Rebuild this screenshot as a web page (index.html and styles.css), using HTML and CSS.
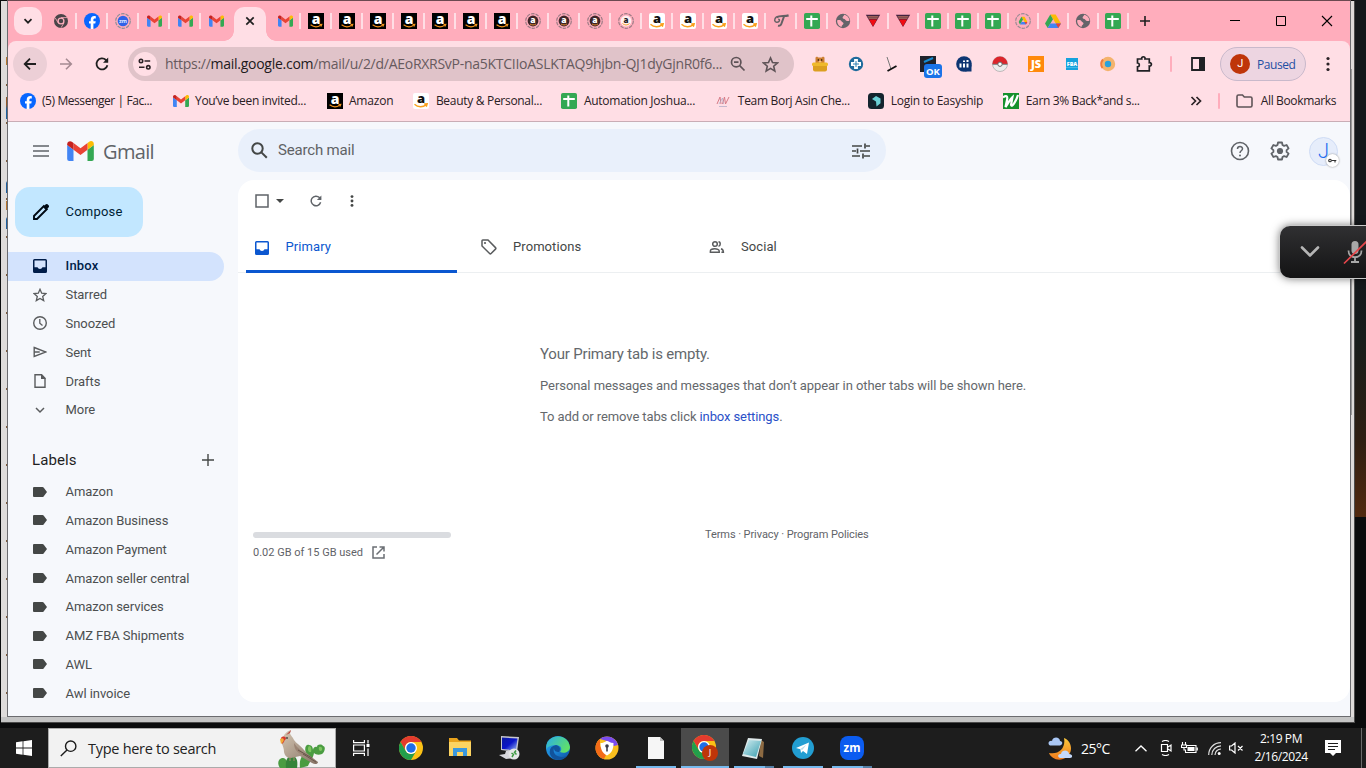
FILE: index.html
```html
<!DOCTYPE html>
<html lang="en">
<head>
<meta charset="utf-8">
<title>Gmail</title>
<link rel="stylesheet" href="styles.css">
</head>
<body>
<svg class="defs" width="0" height="0">
  <defs>
    <linearGradient id="gEdge" x1="0" y1="0" x2="1" y2="1"><stop offset="0" stop-color="#2aa6e4"/><stop offset=".5" stop-color="#1b86d8"/><stop offset="1" stop-color="#0c4fa0"/></linearGradient>
    <linearGradient id="gEdge2" x1="0" y1="0" x2="1" y2=".5"><stop offset="0" stop-color="#2aaee8"/><stop offset="1" stop-color="#5fe06a"/></linearGradient>
    <linearGradient id="gScreen" x1="0" y1="0" x2="1" y2="1"><stop offset="0" stop-color="#0b1a9e"/><stop offset=".5" stop-color="#0a14c8"/><stop offset="1" stop-color="#9fc0f5"/></linearGradient>
    <linearGradient id="gMoon" x1="0" y1="0" x2="0" y2="1"><stop offset="0" stop-color="#fbc83c"/><stop offset="1" stop-color="#f07a1c"/></linearGradient>
    <linearGradient id="gNote" x1="0" y1="0" x2="1" y2="1"><stop offset="0" stop-color="#d5eef2"/><stop offset="1" stop-color="#3a9fb0"/></linearGradient>
    <linearGradient id="gBird" x1="0" y1="0" x2="1" y2="1"><stop offset="0" stop-color="#d6c8b4"/><stop offset="1" stop-color="#857264"/></linearGradient>
  </defs>
  <symbol id="gmail" viewBox="0 0 80 60"><path fill="#4285f4" d="M0 12v42a6 6 0 0 0 6 6h13V26z"/><path fill="#34a853" d="M61 60h13a6 6 0 0 0 6-6V12L61 26z"/><path fill="#fbbc04" d="M61 6v20l19-14V9c0-8-8-11-14-7z"/><path fill="#ea4335" d="M19 26V6l21 16L61 6v20L40 42z"/><path fill="#c5221f" d="M0 9v3l19 14V6l-5-4C8-2 0 2 0 9z"/></symbol>
  <symbol id="chromegray" viewBox="0 0 16 16"><circle cx="8" cy="8" r="7" fill="#4a4448"/><circle cx="8" cy="8" r="2.9" fill="#4a4448" stroke="#ffadbc" stroke-width="1.3"/><path d="M8 4.600h6M5.100 9.800 2.200 4.800M11 9.800l-3 5" stroke="#ffadbc" stroke-width=".8"/></symbol>
  <symbol id="fb" viewBox="0 0 16 16"><circle cx="8" cy="8" r="8" fill="#0866ff"/><path fill="#fff" d="M6.700 16v-5.400H5V8.200h1.700V7c0-2.700 1.200-3.900 3.700-3.900.5 0 1.100.1 1.400.2v2.100h-.9c-1.200 0-1.500.5-1.500 1.500v1.300h2.300l-.4 2.400H9.400V16z"/></symbol>
  <symbol id="zmring" viewBox="0 0 16 16"><circle cx="8" cy="8" r="7.300" fill="none" stroke="#8e8e98" stroke-width="1.200" stroke-dasharray="3.600 1"/><circle cx="8" cy="8" r="5.300" fill="#2f62e8"/><text x="8" y="10" font-size="5.600" font-weight="700" fill="#dce6ff" text-anchor="middle">zm</text></symbol>
  <symbol id="amzb" viewBox="0 0 16 16"><path fill="#000" d="M0 0h16v16H0z"/><text x="8" y="10.600" font-size="14" font-weight="800" fill="#fff" text-anchor="middle">a</text><path d="M2.600 11.800c3.300 2.500 7.300 2.300 10 .4M12.900 13.600l.9-2.200-2.200.1" fill="none" stroke="#f5961d" stroke-width="1.100"/></symbol>
  <symbol id="amzw" viewBox="0 0 16 16"><rect width="16" height="16" rx="2" fill="#fff"/><text x="8" y="10" font-size="13" font-weight="800" fill="#111" text-anchor="middle">a</text><path d="M1.500 11.200c3.500 3.300 8.500 3.200 11.600.5M13.300 13.800l.9-3-3 .2" fill="none" stroke="#f9a01b" stroke-width="1.400"/></symbol>
  <symbol id="amzring" viewBox="0 0 16 16"><circle cx="8" cy="8" r="7.300" fill="none" stroke="#9c7b85" stroke-width="1.200" stroke-dasharray="3.600 1"/><circle cx="8" cy="8" r="5.400" fill="#3f2528"/><text x="8" y="10.400" font-size="8.500" font-weight="800" fill="#fff" text-anchor="middle">a</text><path d="M5 11c2 1.300 4 1.200 6 0" fill="none" stroke="#e08a2a"/></symbol>
  <symbol id="amzringw" viewBox="0 0 16 16"><circle cx="8" cy="8" r="7.300" fill="none" stroke="#9c7b85" stroke-width="1.200" stroke-dasharray="3.600 1"/><circle cx="8" cy="8" r="5.400" fill="#fff0f0"/><text x="8" y="9.800" font-size="8" font-weight="800" fill="#222" text-anchor="middle">a</text><path d="M4.500 10.500c2.300 2 5 1.800 7 0" fill="none" stroke="#f59a20"/></symbol>
  <symbol id="tt" viewBox="0 0 16 16"><g fill="none" stroke="#646064"><path d="M3.500 4.200C7 2.200 11 3.600 15.600 2.400" stroke-width="2.200"/><path d="M11 3.500 8.300 11c-.5 1.600-1.800 2-3.300 1.600" stroke-width="2"/><path d="M3.500 3.800C.5 6 1.500 9.500 4 9.300S7.500 6.200 5.200 6.200" stroke-width="1.500"/></g></symbol>
  <symbol id="sheet" viewBox="0 0 16 16"><rect width="16" height="16" rx="1.800" fill="#34a853"/><path d="M7.300 2.600v10.800M2.200 6h11.600" stroke="#fff" stroke-width="2"/></symbol>
  <symbol id="globe" viewBox="0 0 16 16"><circle cx="8" cy="8" r="7.200" fill="#646469"/><path fill="#ffadbc" d="M2.200 7.200C4 6.500 6 7 6.500 8.300c.4 1 2 1 2 2.200 0 1.500-2 1.200-2 3.400C3.500 13 1.800 10 2.200 7.200zM9 1.800c.2 1.500-1.600 1.600-1.400 3 .2 1.300 1.800.6 2.500 1.700.9 1.500 2.800 1.900 4.300 1.200C14.500 5 12 2 9 1.800z"/></symbol>
  <symbol id="tri" viewBox="0 0 16 16"><path fill="#432340" d="M.8 1.800h14.400L8 14z"/><path d="M2.500 3.800h11M3.500 5.200h9" stroke="#c17a61"/><path fill="#f00b12" d="M4 6.500h8L8 13.600z"/></symbol>
  <symbol id="drive" viewBox="0 0 16 16"><path fill="#fbbc04" d="M5.300 1.500h5.400L16 10.500h-5.200z"/><path fill="#34a853" d="M5.300 1.500 8 6.200 2.700 15 0 10.500z"/><path fill="#4285f4" d="M5.300 10.500H16L13.300 15H2.700z"/><path fill="#ea4335" d="M10.800 10.500H16L13.300 15z"/></symbol>
  <symbol id="drivering" viewBox="0 0 16 16"><circle cx="8" cy="8" r="7.300" fill="none" stroke="#9b8b94" stroke-width="1.200" stroke-dasharray="3.600 1"/><use href="#drive" x="3.500" y="3" width="9" height="9"/></symbol>
  <symbol id="chrome" viewBox="0 0 24 24"><circle cx="12" cy="12" r="12" fill="#fbc116"/><path fill="#e33b2e" d="M1.600 6A12 12 0 0 1 22.400 6H12a6 6 0 0 0-5.200 9z"/><path fill="#229e4b" d="M1.600 6a12 12 0 0 0 10.400 18l5.200-9A6 6 0 0 1 6.800 15z"/><circle cx="12" cy="12" r="6" fill="#fff"/><circle cx="12" cy="12" r="4.700" fill="#1e6ee8"/></symbol>
  <symbol id="inbox" viewBox="0 0 14 14"><path fill="currentColor" fill-rule="evenodd" d="M1.500 0h11A1.500 1.500 0 0 1 14 1.500v11a1.500 1.500 0 0 1-1.500 1.500h-11A1.500 1.500 0 0 1 0 12.500v-11A1.500 1.500 0 0 1 1.500 0zm0 1.500v6.800h3A2.600 2.600 0 0 0 7 10a2.600 2.600 0 0 0 2.500-1.700h3V1.500z"/></symbol>
  <symbol id="label" viewBox="0 0 14 10"><path fill="#444746" d="M1.300 0h8.200c.5 0 .8.200 1.100.6L14 5l-3.400 4.400c-.3.400-.6.600-1.100.6H1.300C.5 10 0 9.500 0 8.700V1.300C0 .5.500 0 1.300 0z"/></symbol>
</svg>

<main class="desktop">
  <div class="brown"></div>
  <section class="backwin"><div class="fringe"></div><div class="backscroll"></div><div class="backfoot"></div></section>

  <section class="window">
    <div class="tabs">
      <button class="drop"><svg width="10" height="10" viewBox="0 0 10 10"><path d="M1.500 3.200 5 6.700l3.500-3.500" fill="none" stroke="#1f1f1f" stroke-width="1.700"/></svg></button>
      <div class="tab"><svg><use href="#chromegray"/></svg></div><div class="tab"><svg><use href="#fb"/></svg></div><div class="tab"><svg><use href="#zmring"/></svg></div><div class="tab"><svg class="gm"><use href="#gmail"/></svg></div><div class="tab"><svg class="gm"><use href="#gmail"/></svg></div><div class="tab nosep"><svg class="gm"><use href="#gmail"/></svg></div>
      <div class="active"><svg width="10" height="10" viewBox="0 0 10 10"><path d="m1.300 1.300 7.400 7.400m0-7.400L1.300 8.700" stroke="#1f1f1f" stroke-width="1.700"/></svg></div>
      <div class="tab"><svg class="gm"><use href="#gmail"/></svg></div><div class="tab"><svg><use href="#amzb"/></svg></div><div class="tab"><svg><use href="#amzb"/></svg></div><div class="tab"><svg><use href="#amzb"/></svg></div><div class="tab"><svg><use href="#amzb"/></svg></div><div class="tab"><svg><use href="#amzb"/></svg></div><div class="tab"><svg><use href="#amzb"/></svg></div><div class="tab"><svg><use href="#amzb"/></svg></div><div class="tab"><svg><use href="#amzring"/></svg></div><div class="tab"><svg><use href="#amzring"/></svg></div><div class="tab"><svg><use href="#amzring"/></svg></div><div class="tab"><svg><use href="#amzringw"/></svg></div><div class="tab"><svg><use href="#amzw"/></svg></div><div class="tab"><svg><use href="#amzw"/></svg></div><div class="tab"><svg><use href="#amzw"/></svg></div><div class="tab"><svg><use href="#amzw"/></svg></div><div class="tab"><svg><use href="#tt"/></svg></div><div class="tab"><svg><use href="#sheet"/></svg></div><div class="tab"><svg><use href="#globe"/></svg></div><div class="tab narrow"><svg><use href="#tri"/></svg></div><div class="tab narrow"><svg><use href="#tri"/></svg></div><div class="tab narrow"><svg><use href="#sheet"/></svg></div><div class="tab narrow"><svg><use href="#sheet"/></svg></div><div class="tab narrow"><svg><use href="#sheet"/></svg></div><div class="tab narrow"><svg><use href="#drivering"/></svg></div><div class="tab narrow"><svg><use href="#drive"/></svg></div><div class="tab narrow"><svg><use href="#globe"/></svg></div><div class="tab narrow"><svg><use href="#sheet"/></svg></div>
      <svg class="plus" width="12" height="12" viewBox="0 0 12 12"><path d="M6 1v10M1 6h10" stroke="#1f1f1f" stroke-width="1.600"/></svg>
      <div class="controls">
        <svg width="12" height="12" viewBox="0 0 12 12"><path d="M1 5.500h10" stroke="#000"/></svg>
        <svg width="12" height="12" viewBox="0 0 12 12"><path d="M1.500 1.500h9v9h-9z" fill="none" stroke="#000"/></svg>
        <svg width="12" height="12" viewBox="0 0 12 12"><path d="m1 1 10 10M11 1 1 11" stroke="#000" stroke-width="1.100"/></svg>
      </div>
    </div>

    <div class="toolbar">
      <button class="nav back"><svg width="14" height="14" viewBox="0 0 14 14"><path d="M13 7H2m5-5.300L1.700 7 7 12.300" fill="none" stroke="#1f1f1f" stroke-width="1.800"/></svg></button>
      <button class="nav fwd"><svg width="14" height="14" viewBox="0 0 14 14"><path d="M1 7h11M7 1.700 12.300 7 7 12.300" fill="none" stroke="#a58a92" stroke-width="1.600"/></svg></button>
      <button class="nav reload"><svg width="14" height="14" viewBox="0 0 14 14"><path d="M12.400 8.200A5.500 5.500 0 1 1 10.900 3l1.600 1.600" fill="none" stroke="#1f1f1f" stroke-width="1.800"/><path d="M13.200.5v5.200H8z" fill="#1f1f1f"/></svg></button>
      <div class="omni">
        <span class="site"><svg width="14" height="12" viewBox="0 0 14 12"><g fill="none" stroke="#2b2226" stroke-width="1.600"><circle cx="3" cy="3" r="1.700"/><path d="M6.500 3h5.700M1 9.300h5.500"/><circle cx="10.300" cy="9.300" r="1.700"/></g></svg></span>
        <span class="url">https://<b>mail.google.com</b>/mail/u/2/d/AEoRXRSvP-na5KTCIIoASLKTAQ9hjbn-QJ1dyGjnR0f6...</span>
        <svg class="zoomout" width="16" height="16" viewBox="0 0 16 16"><g fill="none" stroke="#5e5357" stroke-width="1.700"><circle cx="6.200" cy="6.200" r="4.700"/><path d="m9.700 9.700 4.800 4.800M4 6.200h4.500"/></g></svg>
        <svg class="star" width="16" height="16" viewBox="0 0 16 16"><path d="m8 1.800 1.900 4.300 4.700.4L11 9.600l1.100 4.600L8 11.700l-4.100 2.500L5 9.600 1.400 6.500l4.700-.4z" fill="none" stroke="#5e5357" stroke-width="1.500"/></svg>
      </div>
      <div class="exts">
        <svg viewBox="0 0 16 16"><path fill="#cd7f32" d="M3.500 1.500 5 .5l1.200 1h3.600L11 .5l1.500 1V8h-9z"/><circle cx="6.300" cy="4" r=".7"/><circle cx="9.700" cy="4" r=".7"/><path fill="#f3c08b" d="M6.800 4.800h2.400v1.700H6.800z"/><rect y="6.600" width="16" height="3.600" rx="1.600" fill="#efb92b"/><path fill="#dc9f20" d="M1 10h14v3.500a2 2 0 0 1-2 2H3a2 2 0 0 1-2-2z"/></svg>
        <svg viewBox="0 0 16 16"><circle cx="8" cy="8" r="7.200" fill="#1f6b9c"/><path d="M8 3v10M3 8h10" stroke="#fff" stroke-width="3.800"/><path d="M8 5v6M5 8h6" stroke="#2a7fb0" stroke-width="1"/></svg>
        <svg viewBox="0 0 16 16"><path d="m3 1 4 12" stroke="#777"/><path d="m3.500 15 9-5" stroke="#111" stroke-width="1.800"/></svg>
        <svg class="okext" viewBox="0 0 22 22"><path fill="#20222b" d="M0 0h16v16H0z"/><path d="m4 6 9-4" stroke="#168bd0" stroke-width="2"/><rect x="4" y="8" width="18" height="14" rx="3" fill="#1a73e8"/><text x="13" y="18.800" font-size="9.500" font-weight="700" fill="#fff" text-anchor="middle">OK</text></svg>
        <svg viewBox="0 0 16 16"><circle cx="8" cy="8" r="7.800" fill="#0d3572"/><path fill="#0d3572" d="M9 9h6.500v6.500H9z"/><path d="M4.500 7.500v4M8 7.500v4M11.500 7.500v4M8 4.500v1.600M11.500 4v2" stroke="#fff" stroke-width="2"/></svg>
        <svg viewBox="0 0 16 16"><circle cx="8" cy="8" r="7.500" fill="#ececec" stroke="#999" stroke-width=".6"/><path fill="#dc242b" d="M.4 8a7.600 7.600 0 0 1 15.200 0z"/><path d="M.5 8.300h15" stroke="#777"/><circle cx="8" cy="8.200" r="2.200" fill="#fff" stroke="#666"/></svg>
        <svg viewBox="0 0 16 16"><path fill="#ff8a0c" d="M0 0h16v16H0z"/><text x="8" y="12" font-size="11" font-weight="800" fill="#fff" text-anchor="middle">JS</text></svg>
        <svg viewBox="0 0 16 16"><path fill="#15a2dd" d="M2 2h12v12H2z"/><text x="8" y="9.600" font-size="5.400" font-weight="800" fill="#fff" text-anchor="middle">FBA</text><path d="M2 11.500h12" stroke="#42b9e8"/></svg>
        <svg viewBox="0 0 16 16"><circle cx="8" cy="8" r="5.200" fill="#28a1dc" stroke="#f4b36d" stroke-width="4"/><path d="M2.500 12A7 7 0 0 1 3 3.500" fill="none" stroke="#ef7c3e" stroke-width="2"/></svg>
        <svg viewBox="0 0 16 16"><path d="M1.500 3h4.200c-.7-3 4-3 3.300 0h4.300v3.700c2.800-.5 2.800 3.600 0 3.300V14.800H1.500v-4C4 10.500 4 7.300 1.500 7z" fill="none" stroke="#202124" stroke-width="1.700"/></svg>
      </div>
      <span class="vbar"></span>
      <svg class="panel" width="14" height="14" viewBox="0 0 14 14"><path d="M1 1h12v12H1z" fill="none" stroke="#202124" stroke-width="1.800"/><path fill="#202124" d="M8 0h6v14H8z"/></svg>
      <div class="profile"><span>J</span>Paused</div>
      <svg class="menu" width="4" height="16" viewBox="0 0 4 16"><g fill="#2b2226"><circle cx="2" cy="2.500" r="1.600"/><circle cx="2" cy="8" r="1.600"/><circle cx="2" cy="13.500" r="1.600"/></g></svg>
    </div>

    <div class="bookmarks">
      <a class="bm b1"><svg><use href="#fb"/></svg><span>(5) Messenger | Fac...</span></a>
      <a class="bm b2"><svg><use href="#gmail" y="2" height="12"/></svg><span>You’ve been invited...</span></a>
      <a class="bm b3"><svg><use href="#amzb"/></svg><span>Amazon</span></a>
      <a class="bm b4"><svg><use href="#amzw"/></svg><span>Beauty &amp; Personal...</span></a>
      <a class="bm b5"><svg><use href="#sheet"/></svg><span>Automation Joshua...</span></a>
      <a class="bm b6"><svg viewBox="0 0 16 16"><path d="m2 11 3-7 1 7M7.500 11l2-7 1 7L14 4" fill="none" stroke="#d77b86" stroke-width="1"/><path d="m4 11 3.500-6 1 6M4 13.500h8" fill="none" stroke="#a9a9c4" stroke-width=".7"/></svg><span>Team Borj Asin Che...</span></a>
      <a class="bm b7"><svg viewBox="0 0 16 16"><rect width="16" height="16" rx="3.500" fill="#14242e"/><path fill="#6bd0d6" d="m8 3 4.500 2.500v4.800L8.500 13.500 8 8.500 4 6z"/></svg><span>Login to Easyship</span></a>
      <a class="bm b8"><svg viewBox="0 0 16 16"><path fill="#15912c" d="M0 0h16v16H0z"/><path d="M0 4.500C3 2 5 3 4 7l-1.500 7C6 9 7 6 9.500 4L8 12c1 3 5-4 7-10" fill="none" stroke="#fff" stroke-width="2.200"/></svg><span>Earn 3% Back*and s...</span></a>
      <svg class="more" width="12" height="10" viewBox="0 0 12 10"><path d="m1.500 1 4 4-4 4m5-8 4 4-4 4" fill="none" stroke="#2b2226" stroke-width="1.700"/></svg>
      <span class="vbar"></span>
      <a class="bm all"><svg width="17" height="14" viewBox="0 0 17 14"><path d="M1 2.500C1 1.500 1.500 1 2.500 1h4l1.800 2h6.200c1 0 1.500.5 1.500 1.500v7c0 1-.5 1.500-1.500 1.500h-12C1.500 13 1 12.500 1 11.500z" fill="none" stroke="#5f5458" stroke-width="1.600"/></svg><span>All Bookmarks</span></a>
    </div>

    <div class="page">
      <header>
        <svg class="burger" width="16" height="12" viewBox="0 0 16 12"><path d="M0 1h16M0 6h16M0 11h16" stroke="#5f6368" stroke-width="1.500"/></svg>
        <svg class="logo" width="27" height="20"><use href="#gmail"/></svg>
        <span class="word">Gmail</span>
        <div class="search">
          <svg width="17" height="17" viewBox="0 0 17 17"><g fill="none" stroke="#444746" stroke-width="2"><circle cx="6.500" cy="6.500" r="5.200"/><path d="m10.400 10.400 5.400 5.400"/></g></svg>
          <span>Search mail</span>
          <svg width="18" height="16" viewBox="0 0 18 16"><path d="M0 3h10m4 0h4M0 8h4m4 0h10M0 13h8m4 0h6M13 .5v5M5.500 5.500v5M11 10.500v5" stroke="#444746" stroke-width="1.700" fill="none"/></svg>
        </div>
        <svg class="help" width="20" height="20" viewBox="0 0 20 20"><circle cx="10" cy="10" r="8.500" fill="none" stroke="#5f6368" stroke-width="1.600"/><path d="M7.500 8c0-3.200 5-3.200 5-.2 0 2-2.500 2-2.500 4.100" fill="none" stroke="#5f6368" stroke-width="1.500"/><circle cx="10" cy="14.400" r="1" fill="#5f6368"/></svg>
        <svg class="gear" width="20" height="20" viewBox="0 0 20 20"><path d="M8 1.500h4l.5 2.500 1.600.9 2.500-.9 2 3.400-2 1.700v1.800l2 1.700-2 3.400-2.500-.9-1.600.9-.5 2.500H8L7.500 16l-1.600-.9-2.500.9-2-3.400 2-1.700V9.100l-2-1.700L3.400 4l2.500.9L7.500 4z" fill="none" stroke="#5f6368" stroke-width="1.800" stroke-linejoin="round"/><circle cx="10" cy="10" r="3.100" fill="#5f6368"/></svg>
        <div class="avatar">J<span><svg width="9" height="5" viewBox="0 0 9 5"><circle cx="2" cy="2.500" r="1.300" fill="none" stroke="#333" stroke-width="1.100"/><path d="M3.500 2.500h4.800M7 2.500v2" stroke="#333" stroke-width="1.100"/></svg></span></div>
      </header>
      <div class="body">
        <nav>
          <div class="compose"><svg width="18" height="18" viewBox="0 0 18 18"><path d="M2 16v-3L11.800 3.200l3 3L5 16z" fill="none" stroke="#000a14" stroke-width="1.900"/><path d="m11 4 2.500-2.500c.7-.7 1.600-.7 2.200-.1l.9.900c.6.600.6 1.500-.1 2.200L14 7z" fill="#000a14"/></svg><span>Compose</span></div>
          <div class="item on"><svg class="s14"><use href="#inbox"/></svg>Inbox</div>
          <div class="item"><svg class="s14" viewBox="0 0 14 14"><path d="m7 1.300 1.700 3.900 4.200.4-3.200 2.800 1 4.200L7 10.400l-3.700 2.200 1-4.200L1.100 5.600l4.200-.4z" fill="none" stroke="#5a5c5e" stroke-width="1.300"/></svg>Starred</div>
          <div class="item"><svg class="s14" viewBox="0 0 14 14"><circle cx="7" cy="7" r="6.300" fill="none" stroke="#5a5c5e" stroke-width="1.400"/><path d="M6.800 3v4.300l2.700 2.200" fill="none" stroke="#5a5c5e" stroke-width="1.300"/></svg>Snoozed</div>
          <div class="item"><svg class="s14" viewBox="0 0 14 14"><path d="M1.200 2.500 13 7 1.200 11.500zM1.200 7h5.500" fill="none" stroke="#5a5c5e" stroke-width="1.400"/></svg>Sent</div>
          <div class="item"><svg class="s14" viewBox="0 0 14 14"><path d="M2 .8h6.600L12 4.200v9H2z" fill="none" stroke="#5a5c5e" stroke-width="1.400"/><path fill="#5a5c5e" d="M8 0v5h5z"/></svg>Drafts</div>
          <div class="item"><svg class="s14" viewBox="0 0 14 14"><path d="m3 5 4 4 4-4" fill="none" stroke="#5a5c5e" stroke-width="1.500"/></svg>More</div>
          <div class="labels">Labels<svg width="12" height="12" viewBox="0 0 12 12"><path d="M6 0v12M0 6h12" stroke="#444746" stroke-width="1.400"/></svg></div>
          <div class="item"><svg class="lb"><use href="#label"/></svg>Amazon</div>
          <div class="item"><svg class="lb"><use href="#label"/></svg>Amazon Business</div>
          <div class="item"><svg class="lb"><use href="#label"/></svg>Amazon Payment</div>
          <div class="item"><svg class="lb"><use href="#label"/></svg>Amazon seller central</div>
          <div class="item"><svg class="lb"><use href="#label"/></svg>Amazon services</div>
          <div class="item"><svg class="lb"><use href="#label"/></svg>AMZ FBA Shipments</div>
          <div class="item"><svg class="lb"><use href="#label"/></svg>AWL</div>
          <div class="item"><svg class="lb"><use href="#label"/></svg>Awl invoice</div>
        </nav>
        <article>
          <div class="actions">
            <svg width="14" height="14" viewBox="0 0 14 14"><path d="M1 1h12v12H1z" fill="none" stroke="#5f6368" stroke-width="1.500"/></svg>
            <svg class="caret" width="8" height="4" viewBox="0 0 8 4"><path d="M0 0h8L4 4z" fill="#444746"/></svg>
            <svg class="refresh" width="12" height="12" viewBox="0 0 14 14"><path d="M12.400 8.500A5.600 5.600 0 1 1 11 3l1.500 1.500" fill="none" stroke="#5f6368" stroke-width="1.700"/><path d="M13.300.5v5.300H8z" fill="#5f6368"/></svg>
            <svg width="4" height="12" viewBox="0 0 4 12"><g fill="#444746"><circle cx="2" cy="1.600" r="1.450"/><circle cx="2" cy="6" r="1.450"/><circle cx="2" cy="10.400" r="1.450"/></g></svg>
          </div>
          <div class="cats">
            <div class="cat sel"><svg class="s14"><use href="#inbox"/></svg><span>Primary</span></div>
            <div class="cat"><svg width="16" height="16" viewBox="0 0 16 16"><path d="M1 1.800V7l7.600 7.500c.5.500 1 .5 1.500 0l4.400-4.400c.5-.5.500-1 0-1.500L7 1H1.800C1.300 1 1 1.300 1 1.800z" fill="none" stroke="#5a5c5e" stroke-width="1.500"/><circle cx="4" cy="4" r="1.100" fill="#5a5c5e"/></svg><span>Promotions</span></div>
            <div class="cat"><svg width="16" height="14" viewBox="0 0 16 14"><g fill="none" stroke="#5a5c5e" stroke-width="1.500"><circle cx="6" cy="4" r="2.300"/><path d="M1.400 12.200V11c0-3 8.800-3 8.800 0v1.200zM9.500 1.800c2.300.2 2.300 4.200 0 4.500M12 8.800c1.800.6 2.400 1.300 2.400 3.400h-2"/></g></svg><span>Social</span></div>
          </div>
          <div class="empty">
            <h2><span>Your Primary tab is empty.</span></h2>
            <p>Personal messages and messages that don’t appear in other tabs will be shown here.</p>
            <p>To add or remove tabs click <a>inbox settings</a>.</p>
          </div>
          <footer>
            <div class="quota"><div class="bar"></div><div class="used"><span>0.02 GB of 15 GB used</span><svg width="13" height="13" viewBox="0 0 13 13"><path d="M5 1H1v11h11V8M7.500 1H12v4.500M12 1 4.500 8.500" fill="none" stroke="#6b6f74" stroke-width="1.500"/></svg></div></div>
            <div class="terms">Terms · Privacy · Program Policies</div>
          </footer>
        </article>
      </div>
    </div>
  </section>

  <div class="meeting">
    <svg width="20" height="12" viewBox="0 0 20 12"><path d="m2 1.500 8 8 8-8" fill="none" stroke="#b5b5b5" stroke-width="2.600" stroke-linecap="round" stroke-linejoin="round"/></svg>
    <svg class="mic" width="24" height="26" viewBox="0 0 24 26"><rect x="8.500" y="2" width="7" height="13" rx="3.500" fill="#a8a8a8"/><path d="M5.500 11.500c0 9 13 9 13 0M12 18.500v4M8 23h8" fill="none" stroke="#a8a8a8" stroke-width="1.800"/><path d="M1 24.500 24 2" stroke="#e8464b" stroke-width="1.700"/></svg>
  </div>

  <section class="taskbar">
    <div class="start"><svg width="16" height="16" viewBox="0 0 16 16"><path fill="#fff" d="M0 2.300 6.600 1.300V7.600H0zM7.400 1.200 16 0v7.600H7.400zM0 8.400h6.600v6.300L0 13.800zM7.400 8.400H16V16l-8.600-1.200z"/></svg></div>
    <div class="find">
      <svg width="17" height="17" viewBox="0 0 17 17"><g fill="none" stroke="#1b1b1b" stroke-width="1.400"><circle cx="10.700" cy="6.200" r="5.200"/><path d="M7 9.900.8 16"/></g></svg>
      <span>Type here to search</span>
      <svg class="bird" width="48" height="38" viewBox="0 0 48 38"><path fill="#4a9c41" d="M2 38c-3-4-2-9 2-10 4 0 6 3 6 10z"/><path fill="#358339" d="M8 38c-1-8 2-13 7-12 4 1 5 6 4 12z"/><path fill="#4a9c41" d="M22 38c-1-9 2-13 6-15-2-5 0-9 3-8 3 0 4 3 4 5 0-2 2-4 4-3 0-3 5-3 6-1 3 0 2 6-1 8-3 1-6 1-8-1-1 6-4 8-6 13z"/><path fill="#7cc45e" d="M31 16c2 0 3 3 2 6-3 1-4-4-2-6zM41 17c2-1 4 1 3 3s-4 1-3-3z"/><path fill="url(#gBird)" d="M13 0C9 1 6 4 5 8c-2 2-2 4-1 6 1 2 2 5 2 8 1 4 3 6 7 6l9-2 12 7c3 2 6 1 6-1-5-4-11-8-14-12-4-5-8-7-10-10-1-3-4-5-4-7z"/><path d="M16 13c3 5 8 8 13 13l-5-1c-5-3-8-6-8-12z" fill="#9b8473"/><path d="m25 24 13 8M20 20l14 8" stroke="#69564b" stroke-width="1"/><path d="M3 8c1-2 4-2 5 0 0 2-2 2-2 4l-2 2z" fill="#d6372c"/><path d="M2 9c3-2 5 0 3 3l-2 2z" fill="#f1ac38"/><circle cx="9" cy="8" r=".8"/><path d="m13 0-5 5 4-2z" fill="#bd413c"/><path d="M12 27v4m4-4v4" stroke="#a58a6d"/></svg>
    </div>
    <div class="apps">
      <div><svg width="17" height="16" viewBox="0 0 17 16"><g fill="none" stroke="#fff" stroke-width="1.200"><path d="M.6 0v2.600h10.800V0M.6 16v-2.600h10.800V16M.6 5h10.800v6H.6zM15 0v3.500M15 8.500V16"/></g><path fill="#fff" d="M13.500 4h3v3h-3z"/></svg></div>
      <div><svg width="24" height="24"><use href="#chrome"/></svg></div>
      <div><svg width="22" height="20" viewBox="0 0 22 20"><path fill="#e9a31c" d="M0 0h8l2 2.500h12V18H0z"/><path fill="#fcd462" d="M0 4h22v14H0z"/><path fill="#3b98dd" d="M4 10h14v8h-4v-4H8v4H4z"/></svg></div>
      <div><svg width="24" height="24" viewBox="0 0 24 24"><path fill="#c8c8ce" d="m4 0 18 1-2 15-16-2z"/><path fill="url(#gScreen)" d="m5 1.500 15.500 1-1.700 12L5 13z"/><path fill="#d8d8dd" d="M9 15h6l1 4 3 3-10 1-7-4 6-1z"/><circle cx="17" cy="18" r="5.500" fill="#e6e6e6"/><path d="m14.500 17 2 1.500-1.500 2.500m4-6.500-1.500 2 2 2" fill="none" stroke="#3f9a42" stroke-width="1.500"/></svg></div>
      <div><svg width="24" height="24" viewBox="0 0 24 24"><circle cx="12" cy="12" r="12" fill="url(#gEdge)"/><path d="M.5 9C3-2 22-3 24 11c0 5-6 7-10 5 2-2 2-6-3-7-5 0-9 1-10.500 4z" fill="url(#gEdge2)"/><path d="M8 12c-2 6 4 11 13 8-5 6-15 5-17-2-1-5 1-8 6-9 4 1 5 4 3 7-3 0-5-1-5-4z" fill="#11539c"/></svg></div>
      <div><svg width="24" height="24" viewBox="0 0 24 24"><circle cx="12" cy="12" r="11.500" fill="#f9bf1d"/><path fill="#7a4cf0" d="M5 3c6-5 16-2 18 6l-4 1-7-5z"/><path fill="#f36b17" d="M5 3C-2 8-1 20 9 23l2-4-6-9z"/><path fill="#fff" d="M5.500 7c4 0 5-2 6.500-2s3 2 6.500 2c0 7-2 10-6.500 12.500C7.500 17 5.500 14 5.500 7z"/><path d="M12 9.500v6" stroke="#3a3c48" stroke-width="1.600"/><circle cx="12" cy="10" r="1.800" fill="#3a3c48"/></svg></div>
      <div class="run"><svg width="16" height="22" viewBox="0 0 16 22"><path fill="#f6f6f6" d="M0 0h12l4 4v18H0z"/><path fill="#bbb" d="M12 0v4h4z"/></svg></div>
      <div class="run cur"><svg width="26" height="26" viewBox="0 0 26 26"><use href="#chrome" width="24" height="24"/><circle cx="18" cy="18" r="8" fill="#bf3509"/><text x="18" y="21.300" font-size="9.500" fill="#fff" text-anchor="middle">J</text></svg></div>
      <div class="run multi"><svg width="23" height="23" viewBox="0 0 23 23"><path fill="#8c6a42" d="m19 3 3 2-1 16-4-2z"/><path fill="#dfe9ea" d="m6 1 14 1-5 20L0 19z"/><path fill="url(#gNote)" d="m7 3 12 1-5 16L1 17z"/></svg></div>
      <div class="run"><svg width="22" height="22" viewBox="0 0 22 22"><circle cx="11" cy="11" r="11" fill="#229ed2"/><path fill="#fff" d="M4 11 17 5.500 15 17l-4-3-2 2-.6-3.800z"/><path d="m8.400 12 6-4.300-4.200 5.200z" fill="#b9dcea"/></svg></div>
      <div class="run multi"><svg width="24" height="24" viewBox="0 0 24 24"><rect width="24" height="24" rx="8" fill="#0b5cf0"/><text x="12" y="15.600" font-size="11.500" font-weight="700" fill="#fff" text-anchor="middle">zm</text></svg></div>
    </div>
    <div class="tray">
      <svg class="t-weather" width="25" height="23" viewBox="0 0 25 23"><path fill="url(#gMoon)" d="M16 1c10 4 9 18-1 21-6 2-12-1-14-6 10 2 17-5 15-15z"/><path fill="#a9c7f5" d="M2 8.500C-1 7 1 3 4 4c1-5 8-4 8 0 3 0 3 4 0 4.500z"/><path fill="#c4d9fb" d="M12 21c-3-1-2-4.500 1-4 1-5 8-4 8 0 4 0 4 4 1 4z"/></svg>
      <span class="temp">25°C</span>
      <svg class="t-up" width="12" height="7" viewBox="0 0 12 7"><path d="M.5 6.300 6 1l5.500 5.300" fill="none" stroke="#fff" stroke-width="1.300"/></svg>
      <svg class="t-cam" width="12" height="16" viewBox="0 0 12 16"><path d="M1.500 4.500h6v7h-6zM8 7l3-2v6L8 9M2 1.500C4 .3 7 .3 9 1.500M2 14.500c2 1.200 5 1.200 7 0" fill="none" stroke="#fff" stroke-width="1.200"/></svg>
      <svg class="t-bat" width="17" height="12" viewBox="0 0 17 12"><path d="M6 3.500h9v7H4.500V8M16.300 5.500v3M1.500 0v3M4.500 0v3M.5 3h5v2.500h-5zM3 5.500V8h2" fill="none" stroke="#fff" stroke-width="1.100"/><path fill="#fff" d="M6.500 5h7v4h-7z"/></svg>
      <svg class="t-wifi" width="13" height="13" viewBox="0 0 13 13"><path d="M.7 13C.7 6 6 .7 13 .7M3.800 13C3.800 8 8 3.800 13 3.800M7 13c0-3.300 2.700-6 6-6" fill="none" stroke="#ddd" stroke-width="1.200"/><circle cx="11.200" cy="11.400" r="1.500" fill="#fff"/></svg>
      <svg class="t-vol" width="15" height="12" viewBox="0 0 15 12"><path d="M.6 4h2L6 1v10L2.600 8h-2zM9 4l4.500 4.500m0-4.500L9 8.500" fill="none" stroke="#fff" stroke-width="1.200"/></svg>
      <div class="clock"><span>2:19 PM</span><span>2/16/2024</span></div>
      <svg class="t-note" width="16" height="16" viewBox="0 0 16 16"><path fill="#fff" d="M0 0h16v13h-5L8 16l-3-3H0z"/><path d="M3 3.500h10M3 6.500h10M3 9.500h7" stroke="#1d1d1d"/></svg>
      <i class="peek"></i>
    </div>
  </section>
</main>
</body>
</html>
```
FILE: styles.css
```css
* { box-sizing: border-box; }
body { margin: 0; width: 1366px; height: 768px; overflow: hidden; font-family: "Open Sans", sans-serif; }
.defs { position: absolute; }
button { border: 0; padding: 0; background: none; }
svg { flex: none; display: block; }

/* Desktop and windows */
.desktop { position: relative; width: 1366px; height: 768px; background: #0a0b0c; overflow: hidden; display: flex; flex-direction: column; justify-content: flex-end; }
.brown { position: absolute; right: 0; top: 0; width: 12px; height: 517px; background: linear-gradient(#14181b 0, #14181b 55%, #171d1c 65%, #2e1e12 85%, #52290f 100%); }
.backwin { position: absolute; left: 1px; top: 1px; width: 1354px; height: 722px; background: #dedbda; border-right: 1px solid #4c4c4c; border-bottom: 1px solid #4a4a4a; }
.fringe { position: absolute; left: 5px; top: 56px; width: 2px; height: 640px; background: repeating-linear-gradient(transparent 0 27px, #7e5a3a 27px 29px, transparent 29px 38px), linear-gradient(#b8762e 0 8px, transparent 8px 40px, #96582a 40px 48px, #1d5fa0 52px 62px, transparent 62px 124px, #1d5fa0 126px 136px, transparent 136px 144px, #b8762e 144px 153px, transparent 153px 160px, #1d5fa0 162px 172px, transparent 172px); }
.backscroll { position: absolute; right: 2px; top: 68px; width: 2px; height: 346px; background: #999; }
.backfoot { position: absolute; left: 0; bottom: 0; width: 1353px; height: 5px; background: #c4c4c4; }
.window { position: absolute; left: 7px; top: 0; width: 1344px; height: 717px; border: 1px solid #6b6b6f; border-top-color: #6b4950; background: #f6f8fc; display: flex; flex-direction: column; }

/* Tab strip */
.tabs { height: 40px; background: #ffadbc; display: flex; align-items: center; padding-left: 6px; }
.drop { width: 28px; height: 28px; border-radius: 10px; background: #ffdee5; margin-right: 4px; display: flex; align-items: center; justify-content: center; }
.tab { width: 31px; height: 40px; display: flex; align-items: center; justify-content: center; padding-right: 1px; position: relative; }
.tab.narrow { width: 30px; padding-right: 2px; }
.tab svg { width: 16px; height: 16px; }
.tab svg.gm { width: 15px; height: 12px; }
.tab:not(.nosep)::after { content: ""; position: absolute; right: 0; width: 2px; height: 16px; background: #ffdee5; }
.active { width: 32px; height: 34px; align-self: flex-end; border-radius: 10px 10px 0 0; background: #ffdee5; margin: 0 4px 0 2px; display: flex; align-items: center; justify-content: center; padding-bottom: 6px; position: relative; }
.active::before, .active::after { content: ""; position: absolute; bottom: 0; width: 10px; height: 10px; }
.active::before { left: -10px; background: radial-gradient(circle at 0 0, transparent 9.500px, #ffdee5 10px); }
.active::after { right: -10px; background: radial-gradient(circle at 100% 0, transparent 9.500px, #ffdee5 10px); }
.plus { margin-left: 10px; }
.controls { display: flex; gap: 34px; margin-left: auto; padding-right: 17px; }

/* Toolbar */
.toolbar { height: 46px; background: #ffdee5; border-radius: 8px 8px 0 0; box-shadow: 0 -8px 0 #ffadbc; clip-path: inset(0); display: flex; align-items: center; padding-left: 5px; }
.nav { width: 34px; height: 34px; border-radius: 17px; display: flex; align-items: center; justify-content: center; margin-right: 2px; }
.back { background: #eccfd6; }
.reload { margin-right: 9px; }
.omni { width: 666px; height: 34px; border-radius: 17px; background: #e0c3c9; display: flex; align-items: center; padding-left: 5px; }
.site { width: 24px; height: 24px; border-radius: 12px; background: #ffdee5; display: flex; align-items: center; justify-content: center; margin-right: 8px; }
.url { font-size: 14px; letter-spacing: -.27px; color: #675a5e; width: 558px; white-space: nowrap; padding-bottom: 1px; }
.url b { font-weight: 400; color: #211a1c; }
.zoomout { margin-left: 7px; }
.star { margin-left: 16px; width: 17px; height: 17px; }
.exts { display: flex; gap: 20px; margin-left: 18px; align-items: center; }
.exts svg { width: 16px; height: 16px; overflow: visible; }
.exts .okext { width: 22px; height: 22px; margin: 6px -6px 0 0; }
.vbar { width: 2px; height: 16px; border-radius: 1px; background: #ffadbc; }
.toolbar .vbar { margin-left: 18px; }
.panel { margin-left: 19px; }
.profile { width: 86px; height: 34px; margin-left: 15px; border-radius: 17px; border: 1px solid #c9b9cb; background: #edd5e1; color: #1f4fa3; font-size: 12px; letter-spacing: -.45px; display: flex; align-items: center; padding-left: 9px; gap: 7px; }
.profile span { width: 20px; height: 20px; border-radius: 10px; background: #bf3509; color: #fff; text-align: center; font: 11px/20px Roboto, sans-serif; }
.menu { margin-left: 20px; }

/* Bookmarks */
.bookmarks { height: 35px; background: #ffdee5; border-bottom: 1px solid #c9adb5; display: flex; align-items: center; padding: 0 14px 7px 12px; }
.bm { display: flex; align-items: center; gap: 6px; font-size: 12px; letter-spacing: -.3px; color: #2a2024; white-space: nowrap; }
.bm svg { width: 16px; height: 16px; }
.b1 { width: 153px; letter-spacing: -.42px; } .b2 { width: 154px; } .b3 { width: 86px; } .b4 { width: 148px; }
.b5 { width: 154px; letter-spacing: -.25px; } .b6 { width: 153px; } .b7 { width: 135px; letter-spacing: -.25px; } .b8 { width: 187px; letter-spacing: -.36px; }
.b3 { letter-spacing: -.2px; }
.b1 span { padding-left: 0; }
.b4 span, .b5 span, .b6 span, .b7 span, .b8 span { margin-left: 1px; }
.bookmarks .more { width: 12px; margin-right: 16px; }
.all { margin-left: 16px; gap: 8px; letter-spacing: -.36px; }
.all svg { width: 17px; height: 14px; }

/* Gmail page */
.page { flex: 1; background: #f6f8fc; display: flex; flex-direction: column; font-family: Roboto, sans-serif; color: #4c4f50; }
header { height: 58px; display: flex; align-items: center; }
.burger { margin-left: 25px; }
.logo { margin-left: 18px; }
.word { font: 20px "Open Sans", sans-serif; letter-spacing: -.65px; color: #5f6368; margin-left: 9px; width: 135px; }
.search { width: 648px; height: 43px; margin-top: -1px; border-radius: 22px; background: #e9f0fb; display: flex; align-items: center; padding: 0 16px 0 13px; }
.search span { font-size: 15px; letter-spacing: -.18px; color: #5f6265; margin: 0 auto 0 10px; padding-bottom: 1px; }
.help { margin-left: 344px; }
.gear { margin-left: 20px; }
.avatar { position: relative; width: 29px; height: 29px; margin-left: 19px; border-radius: 50%; border: 1px solid #cfdcf5; background: #e6edfb; color: #1a6cf0; font: 300 20px/27px Roboto, sans-serif; text-align: center; }
.avatar span { position: absolute; right: -2px; bottom: -2px; width: 13px; height: 13px; border-radius: 50%; background: #fff; box-shadow: 0 0 2px #888; display: flex; align-items: center; justify-content: center; }
.body { flex: 1; display: flex; }
nav { width: 230px; padding-top: 7px; }
.compose { width: 128px; height: 50px; margin: 0 0 15px 7px; border-radius: 15px; background: #c2e7ff; color: #001d35; font-size: 13px; letter-spacing: .2px; display: flex; align-items: center; padding-left: 17px; gap: 15.500px; }
.compose span { padding-bottom: 2px; }
.item { height: 28.800px; display: flex; align-items: center; padding: 0 0 1px 25px; gap: 18.500px; font-size: 13px; letter-spacing: -.06px; }
.s14 { width: 14px; height: 14px; }
.lb { width: 14px; height: 10px; }
.item.on { width: 216px; background: #d3e3fd; border-radius: 0 15px 15px 0; color: #001d49; font-weight: 500; letter-spacing: .2px; }
.labels { height: 53px; padding: 17px 18px 0 24px; font-size: 15px; letter-spacing: .1px; color: #1f1f1f; display: flex; align-items: center; justify-content: space-between; width: 224px; }
article { width: 1112px; height: 522px; background: #fff; border-radius: 16px; display: flex; flex-direction: column; }
.actions { height: 42px; display: flex; align-items: center; padding-left: 17px; }
.caret { margin-left: 7px; }
.refresh { margin: 0 28px 0 26px; }
.cats { height: 51px; border-bottom: 1px solid #eceff1; display: flex; padding-left: 8px; }
.cat { width: 228px; height: 51px; display: flex; align-items: center; padding: 0 0 1px 7px; gap: 16px; font-size: 13px; color: #444746; letter-spacing: .08px; }
.cat span { padding-bottom: 2px; }
.sel { width: 211px; margin-right: 17px; padding: 3px 0 0 9px; border-bottom: 3px solid #0b57d0; border-radius: 2px 2px 0 0; color: #0b57d0; gap: 16.500px; }
.sel span { padding-bottom: 3px; }
.empty { padding: 70px 0 0 302px; color: #64686c; font-size: 13px; letter-spacing: -.06px; }
.empty h2 { font-size: 15px; font-weight: 400; letter-spacing: -.19px; line-height: 22px; margin: 0 0 11px; }
.empty p { line-height: 19px; margin: 0 0 12px; }
.empty p + p { letter-spacing: -.1px; }
.empty a { color: #2a50c8; }
footer { display: flex; padding: 90px 0 0 15px; font-size: 11px; color: #5f6368; }
.quota { width: 198px; padding-top: 4px; }
.bar { height: 6px; border-radius: 3px; background: #dadce0; }
.used { display: flex; align-items: center; gap: 9px; margin-top: 8px; }
.terms { margin-left: 254px; letter-spacing: -.08px; }

/* Meeting controls */
.meeting { position: absolute; left: 1280px; top: 226px; width: 100px; height: 52px; border-radius: 10px; background: linear-gradient(#303032, #131314); box-shadow: 0 0 0 1px #c8c8c8, 0 0 10px rgba(0,0,0,.6); display: flex; align-items: center; padding-left: 20px; }
.mic { margin-left: 23px; }

/* Taskbar */
.taskbar { position: relative; height: 40px; background: #1d1d1d; display: flex; color: #fff; }
.start { width: 48px; display: flex; align-items: center; justify-content: center; }
.find { width: 288px; background: #f2f2f2; border: 1px solid #ababab; display: flex; align-items: center; padding-left: 11px; color: #222; font-size: 14.500px; }
.find span { margin-left: 11px; letter-spacing: -.28px; }
.bird { margin: 2px 9px 0 auto; }
.apps { display: flex; margin-left: 1px; }
.apps div { width: 49px; height: 40px; display: flex; align-items: center; justify-content: center; position: relative; }
.apps .run::after { content: ""; position: absolute; bottom: 0; left: 5px; width: 40px; height: 2px; background: #76b9ed; }
.apps .cur { width: 48px; background: #4b4b4b; margin-left: 1px; }
.apps .cur::after { left: 0; width: 48px; }
.apps .multi::after { background: linear-gradient(90deg, #76b9ed 31px, #547fa5 31px); }
.tray { margin-left: auto; display: flex; align-items: center; width: 318px; }
.temp { font-size: 14px; width: 34px; margin-left: 8px; letter-spacing: -.5px; }
.t-up { margin-left: 20px; }
.t-cam { margin-left: 13px; }
.t-bat { margin-left: 9px; }
.t-wifi { margin-left: 10px; }
.t-vol { margin-left: 8px; }
.clock { width: 70px; margin-left: 2px; display: flex; flex-direction: column; align-items: center; font-size: 12px; line-height: 18px; letter-spacing: -.4px; }
.t-note { margin-left: 9px; }
.peek { width: 1px; height: 40px; background: #6a6a6a; margin-left: 20px; }
```
